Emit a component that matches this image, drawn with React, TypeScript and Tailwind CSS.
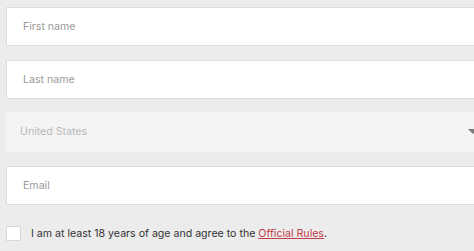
import React from "react";

export default function App() {
  return (
    <div
      className="w-[474px] h-[251px] overflow-hidden bg-[#ececec] pl-[6px] pt-[7px]"
      style={{ fontFamily: "Inter, 'Noto Sans', sans-serif" }}
    >
      <div className="flex flex-col w-[480px]">
        <div className="h-[39px] bg-white border border-[#dcdcdc] flex items-center pl-[16px] text-[10.6px] text-[#9a9a9a]">
          First name
        </div>
        <div className="h-[39px] mt-[14px] bg-white border border-[#dcdcdc] flex items-center pl-[16px] text-[10.6px] text-[#9a9a9a]">
          Last name
        </div>
        <div className="h-[40px] mt-[13px] bg-[#f4f4f4] flex items-center pl-[14px] pr-[8px] text-[10.6px] text-[#b8b8b8] justify-between">
          <span>United States</span>
          <svg width="10" height="6" viewBox="0 0 10 6">
            <path d="M0 0 L10 0 L5 5 Z" fill="#7a7a7a" />
          </svg>
        </div>
        <div className="h-[39px] mt-[14px] bg-white border border-[#dcdcdc] flex items-center pl-[16px] text-[10.6px] text-[#9a9a9a]">
          Email
        </div>
        <div className="mt-[21px] flex items-center gap-[10px] text-[10.6px] text-[#333]">
          <div className="w-[15px] h-[15px] bg-white border border-[#d8d8d8]" />
          <span>
            I am at least 18 years of age and agree to the{" "}
            <span className="text-[#c23b48] underline">Official Rules</span>.
          </span>
        </div>
      </div>
    </div>
  );
}
